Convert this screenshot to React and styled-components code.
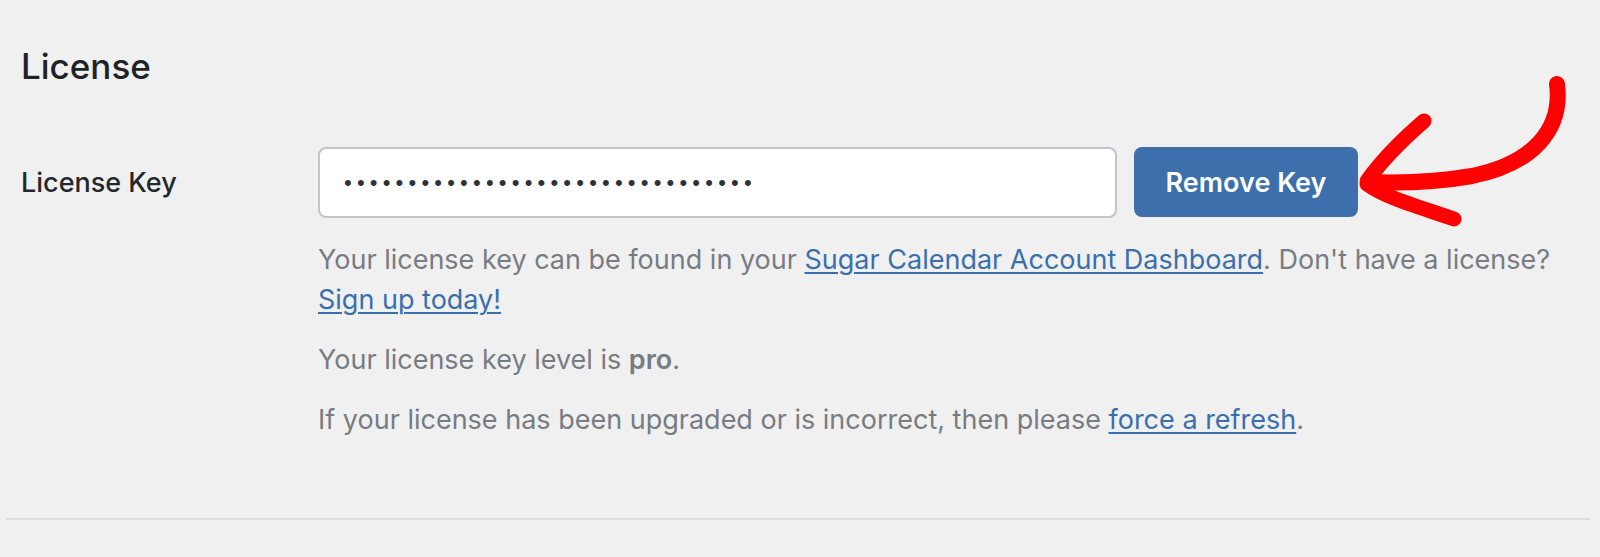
import React from 'react'
import styled, { createGlobalStyle } from 'styled-components'

const GlobalStyle = createGlobalStyle`
  html, body {
    margin: 0;
    padding: 0;
    background: #f0f0f1;
  }
  body {
    font-family: Inter, "Noto Sans", sans-serif;
    -webkit-font-smoothing: antialiased;
  }
`

const Page = styled.div`
  position: relative;
  width: 1600px;
  height: 557px;
  overflow: hidden;
  box-sizing: border-box;
  padding-top: 43px;
`

const Section = styled.section`
  padding: 0 20px 0 21px;
`

const Heading = styled.h2`
  margin: 0;
  font-size: 35px;
  line-height: 46px;
  font-weight: 500;
  color: #1d2327;
`

const Row = styled.div`
  display: flex;
  margin-top: 58px;
`

const Label = styled.label`
  width: 297px;
  flex-shrink: 0;
  height: 71px;
  display: flex;
  align-items: center;
  font-size: 27px;
  font-weight: 500;
  color: #23282d;
`

const Field = styled.div`
  flex: 1;
`

const Controls = styled.div`
  display: flex;
  align-items: flex-start;
  gap: 17px;
`

const KeyInput = styled.input`
  box-sizing: border-box;
  width: 799px;
  height: 71px;
  padding: 0 24px;
  border: 2px solid #c3c4c7;
  border-radius: 8px;
  background: #fff;
  font-family: "Liberation Sans", Arial, sans-serif;
  font-size: 22px;
  letter-spacing: 5.2px;
  color: #2c3338;
  outline: none;
`

const Button = styled.button`
  box-sizing: border-box;
  width: 224px;
  height: 70px;
  border: none;
  border-radius: 8px;
  background: #3c6fab;
  color: #fff;
  font-family: Inter, "Noto Sans", sans-serif;
  font-size: 27px;
  font-weight: 600;
  cursor: pointer;
`

const Description = styled.p`
  margin: ${({ $first }) => ($first ? '22px' : '20px')} 0 0;
  font-size: 27px;
  line-height: 40px;
  color: #787c82;
  b {
    font-weight: 600;
  }
`

const Link = styled.a`
  color: #3a6fad;
  text-decoration: underline;
  text-decoration-thickness: 2px;
  text-underline-offset: 3px;
`

const Divider = styled.hr`
  margin: 78px 10px 0 6px;
  border: none;
  border-top: 2px solid #dcdcde;
`

const Annotation = styled.svg`
  position: absolute;
  top: 0;
  left: 0;
  pointer-events: none;
`

const App = () => {
  return (
    <Page>
      <GlobalStyle />
      <Section>
        <Heading>License</Heading>
        <Row>
          <Label htmlFor="license-key">License Key</Label>
          <Field>
            <Controls>
              <KeyInput
                id="license-key"
                type="password"
                readOnly
                value="abcdefghijklmnopqrstuvwxyz012345"
              />
              <Button>Remove Key</Button>
            </Controls>
            <Description $first>
              Your license key can be found in your{' '}
              <Link href="#">Sugar Calendar Account Dashboard</Link>. Don't have a
              license? <Link href="#">Sign up today!</Link>
            </Description>
            <Description>
              Your license key level is <b>pro</b>.
            </Description>
            <Description>
              If your license has been upgraded or is incorrect, then please{' '}
              <Link href="#">force a refresh</Link>.
            </Description>
          </Field>
        </Row>
      </Section>
      <Divider />
      <Annotation width="1600" height="557" viewBox="0 0 1600 557">
        <g fill="none" stroke="#ff0000" strokeLinecap="round" strokeLinejoin="round">
          <path
            d="M1557 84 C1563 130 1532 164 1472 176 C1432 183 1396 183 1368 182"
            strokeWidth="16"
          />
          <path d="M1424 121 C1402 140 1382 160 1367 181" strokeWidth="15" />
          <path d="M1367 184 C1386 198 1420 207 1454 219" strokeWidth="15" />
        </g>
      </Annotation>
    </Page>
  )
}

export default App
